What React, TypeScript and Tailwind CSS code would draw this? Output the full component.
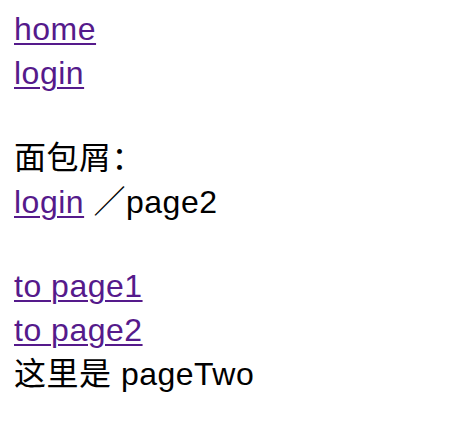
export default function App() {
  const link = "text-[#551a8b] underline decoration-[2px] underline-offset-[3px]";
  return (
    <div
      className="min-h-[442px] bg-white pl-[14px] pt-[7px] text-[32px] leading-[44px] tracking-[0.5px] text-black"
      style={{ fontFamily: '"Liberation Sans", "Noto Sans CJK SC", sans-serif' }}
    >
      <div>
        <a href="#" className={link}>home</a>
      </div>
      <div>
        <a href="#" className={link}>login</a>
      </div>
      <div className="mt-[41px]">面包屑：</div>
      <div>
        <a href="#" className={link}>login</a>
        <span> ／page2</span>
      </div>
      <div className="mt-[40px]">
        <a href="#" className={link}>to page1</a>
      </div>
      <div>
        <a href="#" className={link}>to page2</a>
      </div>
      <div>这里是 pageTwo</div>
    </div>
  );
}
